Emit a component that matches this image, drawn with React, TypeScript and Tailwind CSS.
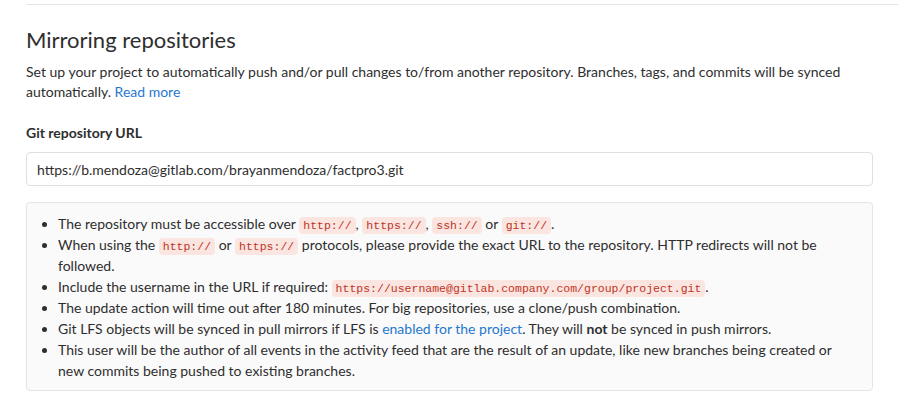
import React from "react";

const Code = ({ children }: { children: React.ReactNode }) => (
  <code className="rounded-[4px] bg-[#fbe5e1] px-[4px] py-[2px] font-['Liberation_Mono',monospace] text-[11.5px] leading-[14px] text-[#c0341d]">
    {children}
  </code>
);

export default function App() {
  return (
    <div className="min-h-[407px] bg-white pl-[26px] font-['Lato',sans-serif] text-[14px] text-[#2e2e2e]">
      <div className="pt-[4px]">
        <div className="h-px bg-[#e5e5e5]" />
      </div>
      <div className="pr-[25px]">
        <h4 className="mt-[21px] text-[22px] leading-[28px] font-normal text-[#2e2e2e]">Mirroring repositories</h4>
        <p className="mt-[8px] leading-[20px]">
          Set up your project to automatically push and/or pull changes to/from another repository. Branches, tags, and commits will be synced automatically.{" "}
          <a className="text-[#1f78d1]" href="#">Read more</a>
        </p>
        <label className="mt-[21px] block font-bold leading-[20px]">Git repository URL</label>
        <div className="mt-[9px] flex h-[34px] items-center rounded-[4px] border border-[#dfdfdf] bg-white px-[10px]">
          https://b.mendoza@gitlab.com/brayanmendoza/factpro3.git
        </div>
        <div className="mt-[16px] rounded-[4px] border border-[#e5e5e5] bg-[#fafafa] pt-[10px] pb-[9px] pl-[16px] pr-[16px]">
          <ul className="list-disc pl-[15px] leading-[21px]">
            <li>
              The repository must be accessible over <Code>http://</Code>, <Code>https://</Code>, <Code>ssh://</Code> or <Code>git://</Code>.
            </li>
            <li>
              When using the <Code>http://</Code> or <Code>https://</Code> protocols, please provide the exact URL to the repository. HTTP redirects will not be followed.
            </li>
            <li>
              Include the username in the URL if required: <Code>https://username@gitlab.company.com/group/project.git</Code>.
            </li>
            <li>The update action will time out after 180 minutes. For big repositories, use a clone/push combination.</li>
            <li>
              Git LFS objects will be synced in pull mirrors if LFS is <a className="text-[#1f78d1]" href="#">enabled for the project</a>. They will <strong>not</strong> be synced in push mirrors.
            </li>
            <li>
              This user will be the author of all events in the activity feed that are the result of an update, like new branches being created or new commits being pushed to existing branches.
            </li>
          </ul>
        </div>
      </div>
    </div>
  );
}
